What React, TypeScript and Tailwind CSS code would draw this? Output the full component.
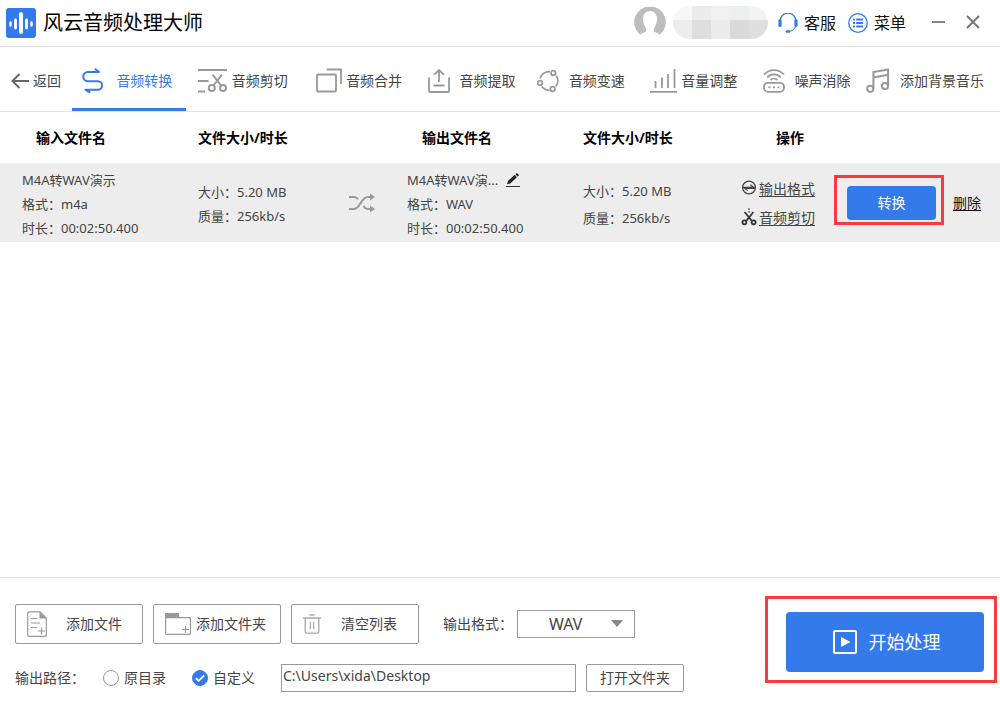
import { useState } from 'react'
import type { ReactNode } from 'react'
import clsx from 'clsx'

const LogoIcon = () => (
  <svg width="30" height="30" viewBox="0 0 30 30" className="shrink-0">
    <rect width="30" height="30" rx="3" fill="#347aea" />
    <g stroke="#fff" strokeLinecap="round">
      <path d="M4.5 14.5v3M25.5 14.5v3" strokeWidth="2.4" />
      <path d="M9.5 12v8M20.5 12v8" strokeWidth="2.8" />
      <path d="M15 6v18" strokeWidth="4" />
    </g>
  </svg>
)

const AvatarIcon = () => (
  <svg width="32" height="28" viewBox="0 0 32 28" className="mb-1 shrink-0">
    <path
      d="M6 27.5A15.8 15.8 0 1 1 26 27.5L20 24.5C19.5 22.5 20 21 21 19.5C22.6 17 23.2 14 23 11A7 7 0 0 0 9 11C8.8 14 9.4 17 11 19.5C12 21 12.5 22.5 12 24.5Z"
      fill="#bdbdbd"
    />
  </svg>
)

const HeadsetIcon = () => (
  <svg width="20" height="20" viewBox="0 0 20 20" fill="none" stroke="#347aea">
    <path d="M2.2 8a7.8 7.8 0 0 1 15.6 0" strokeWidth="1.2" />
    <path d="M2 7.5v5M18 7.5v5" strokeWidth="3.2" strokeLinecap="round" />
    <path d="M17.5 13.5c-1 2.6-3 4.2-5.5 4.8" strokeWidth="1" />
    <path d="M9 18.5h2" strokeWidth="2.6" strokeLinecap="round" />
  </svg>
)

const MenuIcon = () => (
  <svg width="20" height="20" viewBox="0 0 20 20" fill="none" stroke="#347aea">
    <circle cx="10" cy="10" r="9.3" strokeWidth="1.3" />
    <path d="M5 6.5h2M5 10h2M5 13.5h2M8.2 6.5H15M8.2 10H15M8.2 13.5H15" strokeWidth="2" />
  </svg>
)

const BackIcon = () => (
  <svg width="18" height="16" viewBox="0 0 18 16" fill="none" stroke="#666" strokeWidth="2">
    <path d="M8.5 1L1.5 8l7 7M2 8h16" />
  </svg>
)

const ConvertIcon = () => (
  <svg width="22" height="25" viewBox="0 0 22 25" fill="none" stroke="#347aea" strokeWidth="2" strokeLinecap="round" strokeLinejoin="round">
    <path d="M13.5 1.2L17 4H5.8a4.6 4.6 0 0 0 0 9.2h10a4.3 4.3 0 0 1 0 8.6H3.5L7.5 24" />
  </svg>
)

const CutIcon = () => (
  <svg width="30" height="25" viewBox="0 0 30 25" fill="none" stroke="#999" strokeWidth="2">
    <path d="M0 2h29M0 13h10.5M0 23.5h7" />
    <path d="M14.5 6.5l8.5 11M24 6.5l-8.5 11" />
    <circle cx="13.8" cy="20" r="3" />
    <circle cx="25" cy="20" r="3" />
  </svg>
)

const MergeIcon = () => (
  <svg width="26" height="25" viewBox="0 0 26 25" fill="none" stroke="#999" strokeWidth="1.8">
    <rect x="1" y="6.5" width="19" height="17" rx="1" />
    <path d="M10.5 1.5H25V16" />
  </svg>
)

const ExtractIcon = () => (
  <svg width="22" height="25" viewBox="0 0 22 25" fill="none" stroke="#999" strokeWidth="1.8">
    <path d="M1 9.5V23a1 1 0 0 0 1 1h18a1 1 0 0 0 1-1V9.5" />
    <path d="M11 14V2M6 6.8l5-4.8 5 4.8M5.5 17.5h11" />
  </svg>
)

const SpeedIcon = () => (
  <svg width="22" height="24" viewBox="0 0 22 24" fill="none" stroke="#999" strokeWidth="1.8">
    <circle cx="16.3" cy="4" r="2.3" />
    <circle cx="3" cy="14" r="2.3" />
    <circle cx="15.6" cy="20" r="2.3" />
    <path d="M3 9.5C4.5 5 8.5 2.2 13 2.6M19.3 6.8c2.2 3.4 2.1 7.8-.6 10.6M4.8 17.5c2 2.6 4.6 3.8 7.6 3.8" />
  </svg>
)

const VolumeIcon = () => (
  <svg width="27" height="25" viewBox="0 0 27 25" fill="none" stroke="#999" strokeWidth="1.8">
    <path d="M0 23.8h27M5.5 13v7M12 9.5V20M18 6v14M24.5 1v19" />
  </svg>
)

const NoiseIcon = () => (
  <svg width="22" height="25" viewBox="0 0 22 25" fill="none" stroke="#999" strokeWidth="1.8">
    <path d="M1 6.5C6.5.6 15.5.6 21 6.5M4.2 9.3c3.8-4 9.8-4 13.6 0M7.5 12c2-1.8 5-1.8 7 0" />
    <rect x="1" y="14.8" width="20" height="9" rx="4" />
    <path d="M5.5 19.3h2M10 19.3h2M14.5 19.3h2" />
  </svg>
)

const MusicIcon = () => (
  <svg width="24" height="25" viewBox="0 0 24 25" fill="none" stroke="#999" strokeWidth="2">
    <circle cx="4.3" cy="20.8" r="3.1" />
    <circle cx="19" cy="18" r="3.1" />
    <path d="M7.4 20.8V4L22.1 1.4V18M7.4 9.4l14.7-2.6" />
  </svg>
)

const ShuffleIcon = () => (
  <svg width="28" height="20" viewBox="0 0 28 20" fill="none" stroke="#999" strokeWidth="2">
    <path d="M1 4h5c2 0 3 .8 4.2 2.2M1 16h5c6 0 7-12 14-12h3M15.5 13c1.2 2 2.6 3 4.5 3h3" />
    <path d="M22 .5L27 4l-5 3.5zM22 12.5l5 3.5-5 3.5z" fill="#999" stroke="none" />
  </svg>
)

const PencilIcon = () => (
  <svg width="14" height="16" viewBox="0 0 14 16">
    <path d="M2 9l6.7-6.2 2.2 2.4L4.2 11.4 1 12.3zM9.4 2.2L11 .9l2.1 2.3-1.5 1.4z" fill="#222" />
    <path d="M0 14.5h14" stroke="#333" />
  </svg>
)

const FormatIcon = () => (
  <svg width="16" height="16" viewBox="0 0 16 16" fill="none" stroke="#444" strokeWidth="1.3">
    <circle cx="8" cy="7.5" r="6.4" />
    <path d="M2 7.2h10.5L9.2 4.8M14 8.4H3.5l3.3 2.2" strokeWidth="1.1" />
  </svg>
)

const SmallCutIcon = () => (
  <svg width="16" height="18" viewBox="0 0 16 18" fill="none" stroke="#333" strokeWidth="1.7">
    <path d="M3.6 4l7 8.6M12.4 4l-7 8.6" />
    <path d="M8 0v6" strokeWidth="1" strokeDasharray="2 1" />
    <circle cx="3.4" cy="14.3" r="2" />
    <circle cx="12.6" cy="14.3" r="2" />
  </svg>
)

const FileIcon = () => (
  <svg width="20" height="26" viewBox="0 0 20 26" fill="none" stroke="#999">
    <path d="M13 .8H2A1.3 1.3 0 0 0 .7 2v22A1.3 1.3 0 0 0 2 25.3h16a1.3 1.3 0 0 0 1.3-1.3V7" strokeWidth="1.2" />
    <path d="M13 .5V7h6.5z" fill="#999" />
    <path d="M4 7.5h6M4 12h9M4 16.5h6M14.5 16.5v7M11 20h7" strokeWidth="1.2" />
  </svg>
)

const FolderIcon = () => (
  <svg width="26" height="22" viewBox="0 0 26 22" fill="none" stroke="#999">
    <path d="M.6 4.6h24.8v15.8a1 1 0 0 1-1 1H1.6a1 1 0 0 1-1-1z" strokeWidth="1.2" />
    <path d="M0 0h14v5H0z" fill="#999" stroke="none" />
    <path d="M20.5 13v7M17 16.5h7" strokeWidth="1.2" />
  </svg>
)

const TrashIcon = () => (
  <svg width="18" height="20" viewBox="0 0 18 20" fill="none" stroke="#aaa" strokeWidth="1.3">
    <path d="M6.5 1h5M0 4h18M2.2 4v13.5a1.6 1.6 0 0 0 1.6 1.6h10.4a1.6 1.6 0 0 0 1.6-1.6V4M7.4 7.5v7.5M10.6 7.5v7.5" />
  </svg>
)

const PlayIcon = () => (
  <svg width="24" height="24" viewBox="0 0 24 24">
    <rect x="1" y="1" width="22" height="22" rx="1" fill="none" stroke="#fff" strokeWidth="2" />
    <path d="M8 7l9.5 5L8 17z" fill="#fff" />
  </svg>
)

const tabs = [
  { label: '音频转换', icon: <ConvertIcon />, className: 'pl-[10px] pr-[14px] gap-3' },
  { label: '音频剪切', icon: <CutIcon />, className: 'gap-1' },
  { label: '音频合并', icon: <MergeIcon />, className: 'pl-[17px] gap-1' },
  { label: '音频提取', icon: <ExtractIcon />, className: 'pl-[14px] gap-[10px]' },
  { label: '音频变速', icon: <SpeedIcon />, className: 'pl-[10px] gap-[10px]' },
  { label: '音量调整', icon: <VolumeIcon />, className: 'pl-[14px] gap-1' },
  { label: '噪声消除', icon: <NoiseIcon />, className: 'pl-[14px] gap-[10px]' },
  { label: '添加背景音乐', icon: <MusicIcon />, className: 'pl-1 gap-[10px]' },
]

// shades of the masked user name, two rows of five
const maskTop = ['bg-[#f7f7f7]', 'bg-[#ececec]', 'bg-[#f0f0f0]', 'bg-[#eeefef]', 'bg-[#f2f3f3]']
const maskBottom = ['bg-[#ededed]', 'bg-[#dedede]', 'bg-[#ebebeb]', 'bg-[#dadada]', 'bg-[#dfdfdf]']

function ToolButton({ icon, className, children }: { icon: ReactNode; className: string; children: ReactNode }) {
  return (
    <button type="button" className={clsx('flex h-10 w-32 items-center rounded-xs border border-[#999] whitespace-nowrap', className)}>
      {icon}
      {children}
    </button>
  )
}

function PathRadio({ label, checked, onChange }: { label: string; checked: boolean; onChange: () => void }) {
  return (
    <label className="flex items-center gap-[5px] whitespace-nowrap">
      <span className="relative flex">
        <input
          type="radio"
          name="path"
          checked={checked}
          onChange={onChange}
          className="size-4 appearance-none rounded-full border border-[#999] checked:border-[#347aea] checked:bg-[#347aea]"
        />
        {checked && (
          <svg viewBox="0 0 16 16" className="pointer-events-none absolute inset-0 size-4" fill="none" stroke="#fff" strokeWidth="1.8">
            <path d="M3.8 8.2l2.8 2.8 5.6-5.6" />
          </svg>
        )}
      </span>
      {label}
    </label>
  )
}

export default function App() {
  const [tab, setTab] = useState('音频转换')
  const [pathMode, setPathMode] = useState('custom')
  const [path, setPath] = useState('C:\\Users\\xida\\Desktop')

  return (
    <div className="flex min-h-screen flex-col bg-white font-['Noto_Sans','Noto_Sans_CJK_SC',sans-serif] text-sm text-[#444]">
      {/* Title bar */}
      <header className="flex h-[47px] items-center justify-between border-b border-[#ddd] pr-5 pl-1.5">
        <div className="flex items-center gap-[7px]">
          <LogoIcon />
          <h1 className="text-xl leading-7 text-black">风云音频处理大师</h1>
        </div>
        <div className="flex items-center text-base leading-6 text-[#111]">
          <AvatarIcon />
          <div className="mb-0.5 ml-[7px] grid h-[33px] w-[95px] grid-cols-5 grid-rows-[14px_19px] overflow-hidden rounded-full">
            {[...maskTop, ...maskBottom].map((shade, i) => (
              <span key={i} className={shade} />
            ))}
          </div>
          <button type="button" className="ml-[10px] flex items-center gap-1.5">
            <HeadsetIcon />
            客服
          </button>
          <button type="button" className="ml-3 flex items-center gap-1.5">
            <MenuIcon />
            菜单
          </button>
          <button type="button" aria-label="最小化" className="ml-[26px] pb-0.5">
            <svg width="13" height="14" viewBox="0 0 13 14" stroke="#777" strokeWidth="1.8">
              <path d="M0 7h13" />
            </svg>
          </button>
          <button type="button" aria-label="关闭" className="ml-[21px] pb-0.5">
            <svg width="14" height="14" viewBox="0 0 14 14" stroke="#777" strokeWidth="2">
              <path d="M1 1l12 12M13 1L1 13" />
            </svg>
          </button>
        </div>
      </header>

      {/* Toolbar */}
      <nav className="flex h-[65px] items-stretch justify-between gap-[11px] border-b border-[#e2e2e2] pr-4 pl-[11px] whitespace-nowrap">
        <button type="button" className="flex items-center gap-1 pt-[3px]">
          <BackIcon />
          返回
        </button>
        {tabs.map(t => (
          <button
            key={t.label}
            type="button"
            onClick={() => setTab(t.label)}
            className={clsx(
              'flex items-center border-b-[3px] pt-[6px]',
              tab === t.label ? 'border-[#347aea] text-[#347aea]' : 'border-transparent',
              t.className,
            )}
          >
            {t.icon}
            {t.label}
          </button>
        ))}
      </nav>

      {/* File list */}
      <main className="flex-1">
        <table className="w-full table-fixed text-left">
          <thead>
            <tr className="h-[51px] text-black">
              <th className="w-[19%] pl-9">输入文件名</th>
              <th className="w-[14%] pl-2">文件大小/时长</th>
              <th className="w-[6%]" />
              <th className="w-[18%] pl-8">输出文件名</th>
              <th className="w-[16%] pl-[13px]">文件大小/时长</th>
              <th className="w-[27%] pl-[46px]">操作</th>
            </tr>
          </thead>
          <tbody>
            <tr className="h-[79px] bg-[#ededed] align-top text-[13px] leading-6 whitespace-nowrap">
              <td className="pt-[5px] pl-[22px]">
                <p>M4A转WAV演示</p>
                <p>格式：m4a</p>
                <p>时长：00:02:50.400</p>
              </td>
              <td className="pt-[17px] pl-2">
                <p>大小：5.20 MB</p>
                <p>质量：256kb/s</p>
              </td>
              <td className="pl-1 align-middle">
                <div className="flex justify-center">
                  <ShuffleIcon />
                </div>
              </td>
              <td className="pt-[5px] pl-[17px]">
                <div className="flex items-center gap-2">
                  M4A转WAV演...
                  <button type="button" aria-label="重命名">
                    <PencilIcon />
                  </button>
                </div>
                <p>格式：WAV</p>
                <p>时长：00:02:50.400</p>
              </td>
              <td className="pt-[15px] pl-[13px] leading-[27px]">
                <p>大小：5.20 MB</p>
                <p>质量：256kb/s</p>
              </td>
              <td className="pl-[11px] align-middle text-sm">
                <div className="flex items-center">
                  <div className="leading-[29px]">
                    <a href="#format" className="flex items-center gap-0.5">
                      <FormatIcon />
                      <span className="underline underline-offset-2">输出格式</span>
                    </a>
                    <a href="#cut" className="flex items-center gap-0.5">
                      <SmallCutIcon />
                      <span className="underline underline-offset-2">音频剪切</span>
                    </a>
                  </div>
                  <div className="mb-[5px] ml-[19px] flex border-3 border-[#fb3a3e] pt-2 pr-[5px] pb-0.5 pl-[10px]">
                    <button type="button" className="h-[34px] w-[89px] rounded-sm bg-[#347aea] text-white">
                      转换
                    </button>
                  </div>
                  <a href="#delete" className="ml-[9px] text-[#111] underline underline-offset-2">
                    删除
                  </a>
                </div>
              </td>
            </tr>
          </tbody>
        </table>
      </main>

      {/* Output settings */}
      <footer className="flex items-start justify-between border-t border-[#e2e2e2] pr-[3px] pb-[11px] pl-[15px]">
        <div className="pt-[26px]">
          <div className="flex items-center">
            <div className="flex gap-[10px]">
              <ToolButton icon={<FileIcon />} className="gap-[19px] pl-[11px]">
                添加文件
              </ToolButton>
              <ToolButton icon={<FolderIcon />} className="gap-[5px] pl-[11px]">
                添加文件夹
              </ToolButton>
              <ToolButton icon={<TrashIcon />} className="gap-[20px] pl-[11px]">
                清空列表
              </ToolButton>
            </div>
            <label htmlFor="format" className="ml-6 w-[74px] whitespace-nowrap">
              输出格式：
            </label>
            <div className="relative flex">
              <select id="format" className="h-7 w-[118px] appearance-none border border-[#999] pl-[31px] text-base leading-6">
                <option>WAV</option>
                <option>MP3</option>
                <option>M4A</option>
              </select>
              <svg width="12" height="7" viewBox="0 0 12 7" className="pointer-events-none absolute top-[10px] right-3">
                <path d="M0 0h12L6 7z" fill="#888" />
              </svg>
            </div>
          </div>

          <div className="mt-5 flex items-center">
            <span className="w-[88px]">输出路径：</span>
            <div className="flex gap-[26px]">
              <PathRadio label="原目录" checked={pathMode === 'source'} onChange={() => setPathMode('source')} />
              <PathRadio label="自定义" checked={pathMode === 'custom'} onChange={() => setPathMode('custom')} />
            </div>
            <input
              type="text"
              aria-label="输出路径"
              value={path}
              onChange={e => setPath(e.target.value)}
              className="ml-[26px] h-7 w-[295px] border border-[#999] px-px pb-[6px] leading-5"
            />
            <button type="button" className="ml-[10px] h-7 w-[98px] rounded-xs border border-[#999]">
              打开文件夹
            </button>
          </div>
        </div>

        <div className="mt-[18px] border-3 border-[#fb3a3e] pt-[13px] pr-[10px] pb-2 pl-[18px]">
          <button type="button" className="flex h-[60px] w-[198px] items-center justify-center gap-3 rounded-sm bg-[#347aea] pl-[3px] text-lg text-white">
            <PlayIcon />
            开始处理
          </button>
        </div>
      </footer>
    </div>
  )
}
